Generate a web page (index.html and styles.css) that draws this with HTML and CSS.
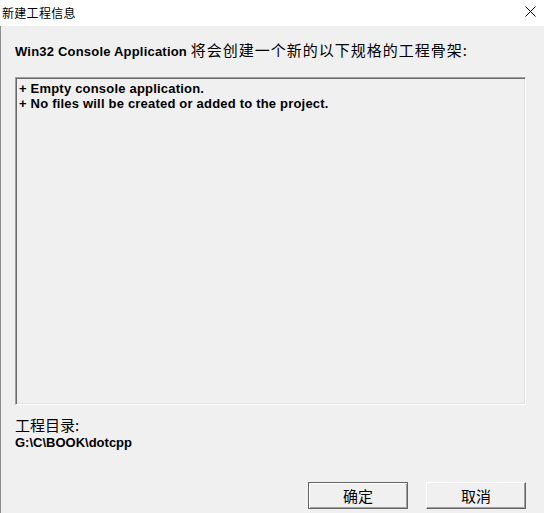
FILE: index.html
```html
<!DOCTYPE html>
<html lang="zh-CN">
<head>
<meta charset="utf-8">
<title>新建工程信息</title>
<link rel="stylesheet" href="styles.css">
</head>
<body>
<div class="dialog">
  <div class="titlebar">
    <span class="title">新建工程信息</span>
    <svg class="close" width="11" height="11" viewBox="0 0 11 11"><path d="M0.5 0.5 L10.5 10.5 M10.5 0.5 L0.5 10.5" stroke="#000" stroke-width="1" fill="none"/></svg>
  </div>
  <div class="content">
    <div class="heading">Win32 Console Application <span class="cjk wide">将会创建一个新的以下规格的工程骨架:</span></div>
    <div class="box">
      <div class="line">+ Empty console application.</div>
      <div class="line">+ No files will be created or added to the project.</div>
    </div>
    <div class="label cjk">工程目录:</div>
    <div class="path">G:\C\BOOK\dotcpp</div>
    <div class="buttons">
      <button class="btn default">确定</button>
      <button class="btn">取消</button>
    </div>
  </div>
</div>
</body>
</html>
```

FILE: styles.css
```css
html, body {
  margin: 0;
  padding: 0;
  background: #f0f0f0;
}
.dialog {
  width: 544px;
  height: 513px;
  background: #f0f0f0;
  box-sizing: border-box;
  border-left: 1px solid #8c8c8c;
  font-family: "Liberation Sans", "Noto Sans CJK SC", sans-serif;
  color: #000;
}
.titlebar {
  height: 25px;
  background: #fff;
  margin-left: -1px;
  display: flex;
  align-items: center;
  justify-content: space-between;
  padding: 0 8px 1px 2px;
}
.title {
  font-family: "Noto Sans CJK SC", sans-serif;
  font-size: 12px;
  line-height: 14px;
  letter-spacing: 0.3px;
}
.close {
  display: block;
  margin-top: -2px;
}
.cjk {
  font-family: "Noto Sans CJK SC", sans-serif;
  font-weight: normal;
  font-size: 15px;
}
.cjk.wide {
  letter-spacing: 1px;
}
.content {
  padding: 0 18px 0 14px;
}
.heading {
  margin-top: 15px;
  height: 18px;
  line-height: 18px;
  font-size: 13px;
  font-weight: bold;
  letter-spacing: 0.2px;
  white-space: nowrap;
}
.box {
  margin-top: 18px;
  height: 328px;
  box-sizing: border-box;
  border-top: 1px solid #a0a0a0;
  border-left: 1px solid #a0a0a0;
  border-right: 1px solid #ffffff;
  border-bottom: 1px solid #ffffff;
  box-shadow: inset 1px 1px 0 #696969, inset -1px -1px 0 #e3e3e3;
  padding: 3px 3px;
}
.line {
  font-size: 13px;
  font-weight: bold;
  line-height: 15px;
  letter-spacing: 0.2px;
  white-space: nowrap;
}
.label {
  margin-top: 11px;
  line-height: 17px;
  height: 17px;
}
.path {
  font-size: 13px;
  font-weight: bold;
  line-height: 15px;
  margin-top: 2px;
}
.buttons {
  display: flex;
  justify-content: flex-end;
  gap: 18px;
  margin-top: 32px;
}
.btn {
  width: 100px;
  height: 27px;
  box-sizing: border-box;
  margin: 0;
  padding: 0;
  background: #f0f0f0;
  font-family: "Noto Sans CJK SC", sans-serif;
  font-size: 15px;
  line-height: 20px;
  color: #000;
  border-top: 1px solid #ffffff;
  border-left: 1px solid #ffffff;
  border-right: 1px solid #646464;
  border-bottom: 1px solid #646464;
  box-shadow: inset -1px -1px 0 #a0a0a0;
}
.btn.default {
  border: 1px solid #646464;
  box-shadow: inset 1px 1px 0 #ffffff, inset -1px -1px 0 #a0a0a0;
}
```
